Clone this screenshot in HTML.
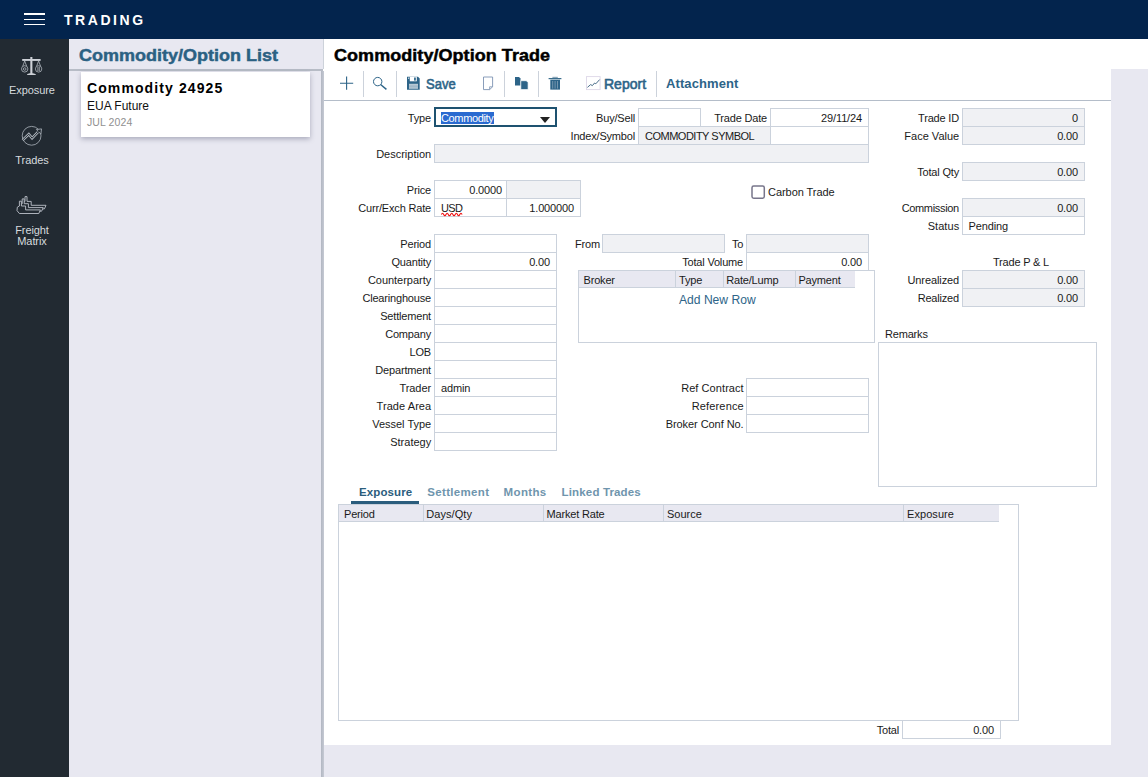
<!DOCTYPE html>
<html><head><meta charset="utf-8"><title>Trading</title>
<style>
*{box-sizing:border-box;margin:0;padding:0}
html,body{width:1148px;height:777px;overflow:hidden;background:#fff;font-family:"Liberation Sans",Arial,sans-serif;font-size:11px;color:#1a1a1a}
.abs,.lbl,.box,.txt{position:absolute}
#hdr{left:0;top:0;width:1148px;height:39px;background:#03244d}
#hdr .bar{position:absolute;left:24px;width:20.6px;height:1.6px;background:#fff}
#hdr .ttl{position:absolute;left:64px;top:11px;font-size:14px;font-weight:bold;color:#fff;letter-spacing:2.55px;line-height:18px}
#side{left:0;top:39px;width:69px;height:738px;background:#222a32}
#side .it{position:absolute;left:0;width:64px;text-align:center;color:#d6dade;font-size:11px;line-height:11px;letter-spacing:-.08px}
#list{left:69px;top:39px;width:254px;height:738px;background:#e8e8f1}
#list .h{position:absolute;left:10px;top:6px;font-size:18px;font-weight:bold;color:#2b6183;line-height:20px;white-space:nowrap;letter-spacing:0;-webkit-text-stroke:.5px #2b6183;transform:scale(1,.94);transform-origin:0 50%}
#list .ln{position:absolute;left:0;top:30px;width:254px;height:2px;background:#b7bcc6}
#card{position:absolute;left:12px;top:33px;width:229px;height:65px;background:#fff;box-shadow:0 2px 5px rgba(60,65,95,.36)}
#card .a{position:absolute;left:6px;top:7px;font-size:14px;font-weight:bold;letter-spacing:1.1px;color:#000;line-height:18px;white-space:nowrap}
#card .b{position:absolute;left:6px;top:27px;font-size:12px;color:#111;line-height:14px}
#card .c{position:absolute;left:6px;top:43.5px;font-size:10.5px;letter-spacing:.1px;color:#909090;line-height:12px}
#split{left:321px;top:71px;width:3px;height:706px;background:linear-gradient(90deg,#b1b6c1,#c6cad4)}
#lav1{left:1111px;top:69px;width:37px;height:708px;background:#e8e8f1}
#lav2{left:324px;top:745px;width:824px;height:32px;background:#e8e8f1}
#mt{left:334px;top:45px;font-size:18px;font-weight:bold;color:#000;line-height:20px;white-space:nowrap;letter-spacing:.05px;-webkit-text-stroke:.5px #000;transform:scale(1,.94);transform-origin:0 50%}
#tbl{left:324px;top:100px;width:787px;height:1px;background:#b4bdc9}
.sep{position:absolute;top:71px;width:1px;height:25.5px;background:#ccd2db}
.tb{position:absolute;top:75px;font-size:14px;font-weight:normal;-webkit-text-stroke:.6px #2d6488;color:#2d6488;transform-origin:0 50%;line-height:18px;white-space:nowrap}
.lbl{width:140px;height:19px;line-height:20px;text-align:right;white-space:nowrap;letter-spacing:-.18px}
.txt{height:19px;line-height:20px;white-space:nowrap;letter-spacing:-.18px}
.box{height:19px;line-height:18px;border:1px solid #cbd2dc;background:#fff;padding:0 6px;white-space:nowrap;overflow:hidden;letter-spacing:-.14px}
.box.ar{text-align:right}
.box.dis{background:#f0f1f4}
.sq{letter-spacing:-.6px}
.gh{position:absolute;height:17px;line-height:18px;letter-spacing:-.18px;background:#e8e8f1;border-right:1px solid #cbd2dc;border-bottom:1px solid #cbd2dc;padding-left:5px;white-space:nowrap}
.tab{position:absolute;top:484px;letter-spacing:.1px;font-size:11.5px;font-weight:bold;color:#6f95ad;line-height:16px;white-space:nowrap}
</style></head><body>
<div id="hdr" class="abs"><div class="bar" style="top:13.4px"></div><div class="bar" style="top:18.5px"></div><div class="bar" style="top:23.6px"></div><div class="ttl">TRADING</div></div>
<div id="side" class="abs">
 <div class="it" style="top:46px">Exposure</div>
 <div class="it" style="top:116px">Trades</div>
 <div class="it" style="top:186px">Freight<br>Matrix</div>
</div>
<div id="list" class="abs"><div class="h">Commodity/Option List</div><div class="ln"></div>
 <div id="card"><div class="a">Commodity 24925</div><div class="b">EUA Future</div><div class="c">JUL 2024</div></div>
</div>
<div id="split" class="abs"></div><div class="abs" style="left:323px;top:39px;width:1px;height:30px;background:#cdd2da"></div>
<div id="lav1" class="abs"></div><div id="lav2" class="abs"></div>
<div id="mt" class="abs">Commodity/Option Trade</div>
<div id="tbl" class="abs"></div>
<div class="sep" style="left:363px"></div><div class="sep" style="left:396px"></div><div class="sep" style="left:504px"></div><div class="sep" style="left:538px"></div><div class="sep" style="left:656px"></div>
<div class="tb" style="left:425.5px;transform:scaleX(.93)">Save</div><div class="tb" style="left:604px">Report</div><div class="tb" style="left:666px;top:75px;letter-spacing:.1px;font-size:13px;font-weight:bold;-webkit-text-stroke:0">Attachment</div>
<svg class="abs" style="left:0;top:0;pointer-events:none" width="1148" height="777" viewBox="0 0 1148 777">
<!-- sidebar: scale -->
<g fill="#cdd1d7" stroke="none">
<rect x="22.2" y="59" width="18.4" height="1.9"/>
<rect x="30.3" y="57" width="2.1" height="17"/>
<path d="M27 75.1 L36 75.1 L35.4 73.9 L33 73.2 L29.6 73.2 L27.4 73.9 Z"/>
</g>
<g fill="none" stroke="#b0b6be" stroke-width="0.8">
<circle cx="24.7" cy="68.9" r="3.2"/><path d="M24.7 61 L22.8 66 M24.7 61 L26.6 66"/><circle cx="24.7" cy="69" r="1.3"/>
<circle cx="38.6" cy="68.9" r="3.2"/><path d="M38.6 61 L36.7 66 M38.6 61 L40.5 66"/><path d="M37.9 66.8 V71 M39.3 66.8 V71"/>
</g>
<!-- sidebar: trades -->
<g fill="none" stroke="#a4abb3" stroke-width="0.85">
<circle cx="31.6" cy="135.8" r="9.4"/>
</g>
<path d="M22.6 140.1 L28.8 134.2 L32.1 138.2 L37.9 132.2" fill="none" stroke="#aab1b9" stroke-width="2.6" stroke-linejoin="miter"/>
<path d="M36.4 129.5 L41.5 128.9 L40.9 134.1 Z" fill="#222a32" stroke="#aab1b9" stroke-width="0.85"/>
<path d="M22.6 140.1 L28.8 134.2 L32.1 138.2 L38.9 131.2" fill="none" stroke="#222a32" stroke-width="1.0" stroke-linejoin="miter"/>
<!-- sidebar: ships -->
<g fill="#222a32" stroke="#bcc1c9" stroke-width="0.9" stroke-linejoin="round">
<path id="shp" d="M17.3 207.2 L19.4 206 L19.4 201.2 L21.4 201.2 L21.4 206 L25.6 206 L25.6 209.9 L40.4 209.9 L38.8 213.5 L19.4 213.5 L17 210.6 Z" transform="translate(5.6,-4.6)"/>
<path d="M17.3 207.2 L19.4 206 L19.4 201.2 L21.4 201.2 L21.4 206 L25.6 206 L25.6 209.9 L40.4 209.9 L38.8 213.5 L19.4 213.5 L17 210.6 Z" transform="translate(2.8,-2.3)"/>
<path d="M17.3 207.2 L19.4 206 L19.4 201.2 L21.4 201.2 L21.4 206 L25.6 206 L25.6 209.9 L40.4 209.9 L38.8 213.5 L19.4 213.5 L17 210.6 Z"/>
</g>
<!-- toolbar: plus -->
<path d="M340 83.2 H353.2 M346.6 76.6 V89.8" stroke="#2d6488" stroke-width="1.1" fill="none"/>
<!-- magnifier -->
<circle cx="377.7" cy="81.6" r="4.2" fill="none" stroke="#2d6488" stroke-width="1"/>
<path d="M380.6 84.5 L386.4 89.4" stroke="#2d6488" stroke-width="1.4" fill="none"/>
<!-- floppy -->
<path d="M407 76.8 H418 L419.7 78.4 V89.8 H407 Z" fill="#2d6488"/>
<rect x="409.8" y="76.8" width="7" height="4.5" fill="#fff"/>
<rect x="414.1" y="77.5" width="1.7" height="3.1" fill="#2d6488"/>
<rect x="408" y="77.6" width="1.2" height="1.2" fill="#dfe8ee"/>
<rect x="409" y="83.8" width="9" height="5" fill="#c3d2dc"/>
<path d="M409 85.2 H418 M409 86.6 H418 M409 88 H418" stroke="#86a4b8" stroke-width="0.6"/>
<!-- note -->
<path d="M483.5 77 H492.6 V86.8 L489.6 89.6 H483.5 Z" fill="#fff" stroke="#7d93b3" stroke-width="0.9"/>
<path d="M492.6 86.8 H489.6 V89.6" fill="none" stroke="#7d93b3" stroke-width="0.8"/>
<!-- copy -->
<path d="M515 77 H519 L520.5 78.5 V85.6 H515 Z" fill="#2d6488"/>
<path d="M520.8 80.7 H526.3 L528.1 82.5 V89.6 H520.8 Z" fill="#2d6488" stroke="#fff" stroke-width="0.7"/>
<!-- trash -->
<rect x="552.4" y="76.8" width="5.4" height="1.4" fill="#8fa9bb"/>
<rect x="548.6" y="78" width="12.8" height="1.2" fill="#3b6d8c"/>
<rect x="550.3" y="79.7" width="9.7" height="9.9" fill="#2d6488"/>
<path d="M552.7 81 V88.6 M555.1 81 V88.6 M557.5 81 V88.6" stroke="#86a3b8" stroke-width="0.8"/>
<!-- report icon -->
<rect x="586.5" y="76.6" width="13.6" height="13" fill="#fff" stroke="#ddd8e8" stroke-width="0.9"/>
<path d="M587.4 87.4 L590.6 84.6 L592.4 85.6 L594.6 83 L595.8 83.8 L599.6 79.6" fill="none" stroke="#3f6583" stroke-width="0.95"/>
</svg>
<!-- type select -->
<div class="abs" style="left:434px;top:107px;width:123px;height:20px;border:2px solid #1e5270;background:#fff"></div>
<div class="abs" style="left:441px;top:112px;height:12px;line-height:13px;background:#2a6ad0;color:#fff;white-space:nowrap;letter-spacing:-0.35px;padding-right:1px">Commodity</div>
<div class="abs" style="left:540.4px;top:117px;width:0;height:0;border-left:5.6px solid transparent;border-right:5.6px solid transparent;border-top:6.4px solid #222"></div>
<div class="lbl" style="left:291px;top:108px;">Type</div>
<div class="lbl" style="left:291.18px;top:144px;letter-spacing:0.0px;">Description</div>
<div class="lbl" style="left:291px;top:180px;">Price</div>
<div class="lbl" style="left:291px;top:198px;">Curr/Exch Rate</div>
<div class="lbl" style="left:291px;top:234px;">Period</div>
<div class="lbl" style="left:291px;top:252px;">Quantity</div>
<div class="lbl" style="left:291.15000000000003px;top:270px;letter-spacing:-0.03px;">Counterparty</div>
<div class="lbl" style="left:291px;top:288px;">Clearinghouse</div>
<div class="lbl" style="left:291px;top:306px;">Settlement</div>
<div class="lbl" style="left:291px;top:324px;">Company</div>
<div class="lbl" style="left:291px;top:342px;">LOB</div>
<div class="lbl" style="left:291px;top:360px;">Department</div>
<div class="lbl" style="left:291.13px;top:378px;letter-spacing:-0.05px;">Trader</div>
<div class="lbl" style="left:291.25px;top:396px;letter-spacing:0.07px;">Trade Area</div>
<div class="lbl" style="left:291.16px;top:414px;letter-spacing:-0.02px;">Vessel Type</div>
<div class="lbl" style="left:291.18px;top:432px;letter-spacing:0.0px;">Strategy</div>
<div class="box " style="left:434px;top:234px;width:123px;"></div>
<div class="box ar " style="left:434px;top:252px;width:123px;">0.00</div>
<div class="box " style="left:434px;top:270px;width:123px;"></div>
<div class="box " style="left:434px;top:288px;width:123px;"></div>
<div class="box " style="left:434px;top:306px;width:123px;"></div>
<div class="box " style="left:434px;top:324px;width:123px;"></div>
<div class="box " style="left:434px;top:342px;width:123px;"></div>
<div class="box " style="left:434px;top:360px;width:123px;"></div>
<div class="box " style="left:434px;top:378px;width:123px;">admin</div>
<div class="box " style="left:434px;top:396px;width:123px;"></div>
<div class="box " style="left:434px;top:414px;width:123px;"></div>
<div class="box " style="left:434px;top:432px;width:123px;"></div>
<div class="box dis" style="left:434px;top:144px;width:435px;"></div>
<div class="box ar " style="left:434px;top:180px;width:73px;padding-right:4px;">0.0000</div>
<div class="box dis" style="left:506px;top:180px;width:75px;"></div>
<div class="box " style="left:434px;top:198px;width:73px;"><span class="sq">USD</span></div>
<div class="box ar " style="left:506px;top:198px;width:75px;">1.000000</div>
<div class="lbl" style="left:495px;top:108px;">Buy/Sell</div>
<div class="box " style="left:638px;top:108px;width:63px;"></div>
<div class="lbl" style="left:627px;top:108px;">Trade Date</div>
<div class="box ar " style="left:770px;top:108px;width:99px;">29/11/24</div>
<div class="lbl" style="left:495px;top:126px;">Index/Symbol</div>
<div class="box dis" style="left:638px;top:126px;width:133px;letter-spacing:-.5px;">COMMODITY SYMBOL</div>
<div class="box " style="left:770px;top:126px;width:99px;"></div>
<div class="txt" style="left:575px;top:234px">From</div>
<div class="box dis" style="left:602px;top:234px;width:123px;"></div>
<div class="txt" style="left:732px;top:234px">To</div>
<div class="box dis" style="left:746px;top:234px;width:123px;"></div>
<div class="lbl" style="left:603px;top:252px;">Total Volume</div>
<div class="box ar " style="left:746px;top:252px;width:123px;">0.00</div>
<div class="lbl" style="left:603.75px;top:378px;letter-spacing:0.07px;">Ref Contract</div>
<div class="lbl" style="left:603.8299999999999px;top:396px;letter-spacing:0.15px;">Reference</div>
<div class="lbl" style="left:603.62px;top:414px;letter-spacing:-0.06px;">Broker Conf No.</div>
<div class="box " style="left:746px;top:378px;width:123px;"></div>
<div class="box " style="left:746px;top:396px;width:123px;"></div>
<div class="box " style="left:746px;top:414px;width:123px;"></div>
<div class="lbl" style="left:819px;top:108px;">Trade ID</div>
<div class="box ar dis" style="left:962px;top:108px;width:123px;">0</div>
<div class="lbl" style="left:819.18px;top:126px;letter-spacing:0.0px;">Face Value</div>
<div class="box ar dis" style="left:962px;top:126px;width:123px;">0.00</div>
<div class="lbl" style="left:819px;top:162px;">Total Qty</div>
<div class="box ar dis" style="left:962px;top:162px;width:123px;">0.00</div>
<div class="lbl" style="left:818.8499999999999px;top:198px;letter-spacing:-0.33px;">Commission</div>
<div class="box ar dis" style="left:962px;top:198px;width:123px;">0.00</div>
<div class="lbl" style="left:819.25px;top:216px;letter-spacing:0.07px;">Status</div>
<div class="box " style="left:962px;top:216px;width:123px;padding-left:5.5px;">Pending</div>
<div class="txt" style="left:962px;width:118px;text-align:center;top:252px">Trade P &amp; L</div>
<div class="lbl" style="left:819.0799999999999px;top:270px;letter-spacing:-0.1px;">Unrealized</div>
<div class="box ar dis" style="left:962px;top:270px;width:123px;">0.00</div>
<div class="lbl" style="left:819px;top:288px;">Realized</div>
<div class="box ar dis" style="left:962px;top:288px;width:123px;">0.00</div>
<div class="txt" style="left:885px;top:324px">Remarks</div>
<svg class="abs" style="left:0;top:0;pointer-events:none" width="1148" height="777" viewBox="0 0 1148 777"><path d="M441.4 214.4 q1.15 -2.4 2.3 0 t2.3 0 t2.3 0 t2.3 0 t2.3 0 t2.3 0 t2.3 0 t2.3 0 t2.3 0" fill="none" stroke="#f01010" stroke-width="1.15"/>
</svg>
<!-- carbon -->
<svg class="abs" style="left:748px;top:182px" width="20" height="20" viewBox="748 182 20 20"><rect x="752" y="186" width="12.3" height="12.3" rx="1.7" fill="#fff" stroke="#77758a" stroke-width="1.5"/></svg>
<div class="txt" style="left:768px;top:182px;letter-spacing:-.05px">Carbon Trade</div>
<!-- broker grid -->
<div class="abs" style="left:578px;top:270px;width:297px;height:73px;border:1px solid #cbd2dc;background:#fff"></div>
<div class="gh" style="left:579px;top:271px;width:97px;padding-left:4.5px">Broker</div>
<div class="gh" style="left:676px;top:271px;width:48px;padding-left:3px">Type</div>
<div class="gh" style="left:724px;top:271px;width:72px;padding-left:2.2px">Rate/Lump</div>
<div class="gh" style="left:796px;top:271px;width:59px;padding-left:2.4px;border-right:none">Payment</div>
<div class="abs" style="left:679px;top:292px;font-size:12.1px;color:#2d6488;line-height:16px;white-space:nowrap">Add New Row</div>
<!-- remarks -->
<div class="abs" style="left:878px;top:342px;width:219px;height:145px;border:1px solid #cbd2dc;background:#fff"></div>
<!-- tabs -->
<div class="tab" style="left:359px;color:#2b5d7d">Exposure</div>
<div class="abs" style="left:351px;top:501px;width:68px;height:3px;background:#2b5d7d"></div>
<div class="tab" style="left:427.3px;letter-spacing:.32px">Settlement</div>
<div class="tab" style="left:503.6px;letter-spacing:.35px">Months</div>
<div class="tab" style="left:561.6px;letter-spacing:.15px">Linked Trades</div>
<!-- exposure grid -->
<div class="abs" style="left:338px;top:504px;width:681px;height:217px;border:1px solid #cbd2dc;background:#fff"></div>
<div class="gh" style="left:339px;top:505px;width:85px">Period</div>
<div class="gh" style="left:424px;top:505px;width:120px;padding-left:2.2px;letter-spacing:.07px">Days/Qty</div>
<div class="gh" style="left:544px;top:505px;width:120px;padding-left:2.6px">Market Rate</div>
<div class="gh" style="left:664px;top:505px;width:240px;padding-left:3px;letter-spacing:0">Source</div>
<div class="gh" style="left:904px;top:505px;width:95px;padding-left:3px;border-right:none;letter-spacing:.07px">Exposure</div>
<div class="lbl" style="left:759px;top:720px">Total</div>
<div class="box ar" style="left:902px;top:720px;width:99px">0.00</div>
</body></html>
